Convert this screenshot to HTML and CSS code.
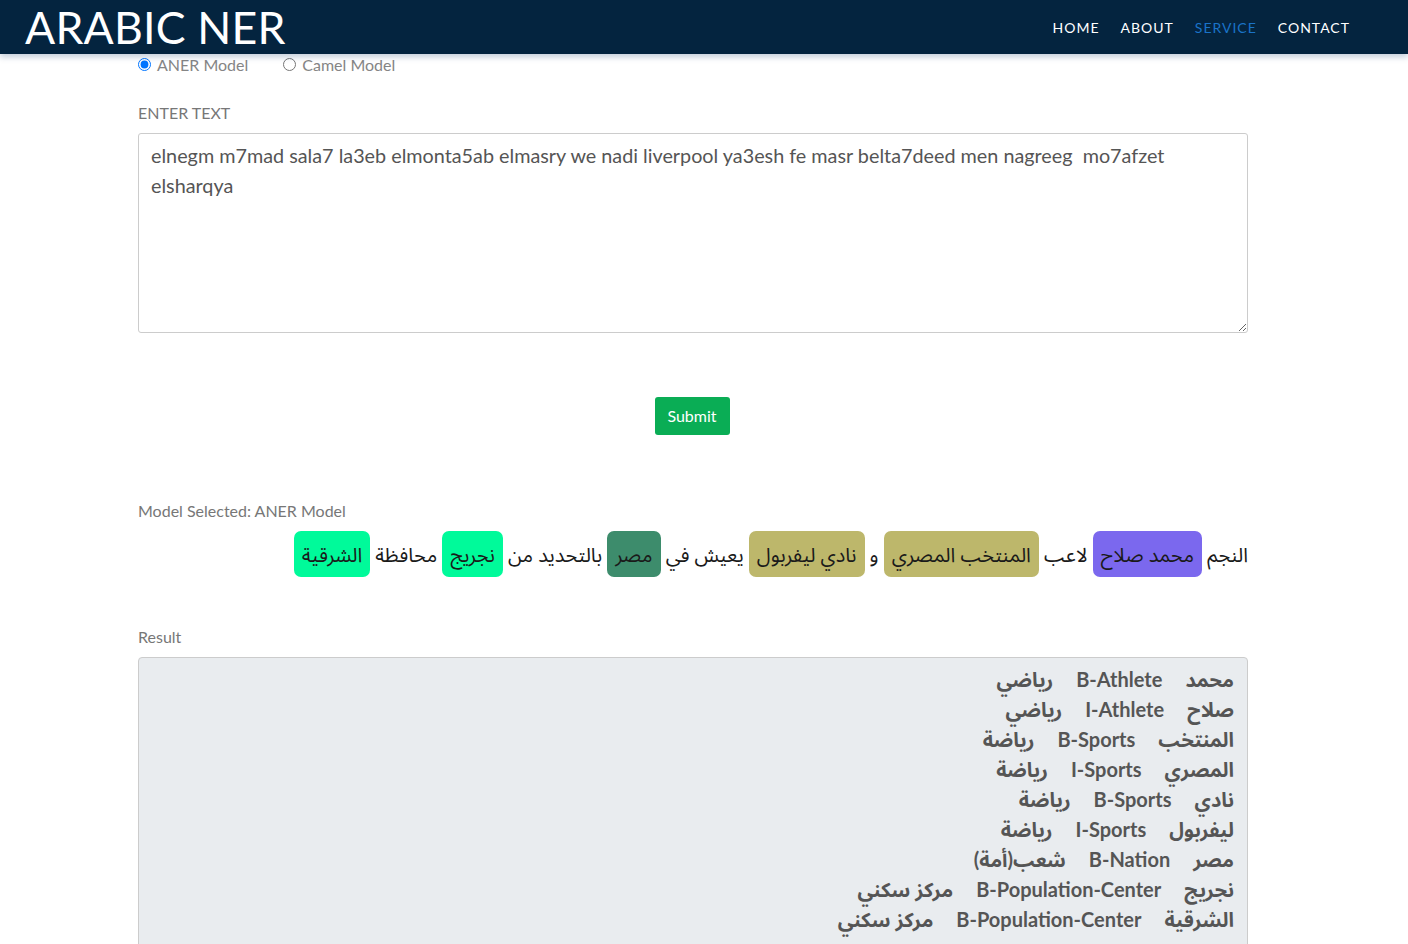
FILE: index.html
```html
<!DOCTYPE html>
<html lang="en">
<head>
<meta charset="utf-8">
<title>Arabic NER</title>
<link rel="stylesheet" href="styles.css">
</head>
<body>
<header class="topbar">
  <div class="brand">ARABIC NER</div>
  <nav class="nav">
    <a href="#" class="nav-link">HOME</a>
    <a href="#" class="nav-link">ABOUT</a>
    <a href="#" class="nav-link active">SERVICE</a>
    <a href="#" class="nav-link">CONTACT</a>
  </nav>
</header>
<main class="content">
  <div class="models">
    <label class="model"><input type="radio" name="model" checked> ANER Model</label>
    <label class="model"><input type="radio" name="model"> Camel Model</label>
  </div>
  <div class="field-label enter">ENTER TEXT</div>
  <textarea class="input-text">elnegm m7mad sala7 la3eb elmonta5ab elmasry we nadi liverpool ya3esh fe masr belta7deed men nagreeg  mo7afzet elsharqya</textarea>
  <div class="submit-row"><button class="submit">Submit</button></div>
  <div class="field-label selected">Model Selected: ANER Model</div>
  <div class="entities" dir="rtl">النجم <span class="ent athlete">محمد صلاح</span> لاعب <span class="ent sports">المنتخب المصري</span> و <span class="ent sports">نادي ليفربول</span> يعيش في <span class="ent nation">مصر</span> بالتحديد من <span class="ent center">نجريج</span> محافظة <span class="ent center">الشرقية</span></div>
  <div class="field-label result-label">Result</div>
  <div class="result" dir="rtl">
    <div class="row"><span>محمد</span><span>B-Athlete</span><span>رياضي</span></div>
    <div class="row"><span>صلاح</span><span>I-Athlete</span><span>رياضي</span></div>
    <div class="row"><span>المنتخب</span><span>B-Sports</span><span>رياضة</span></div>
    <div class="row"><span>المصري</span><span>I-Sports</span><span>رياضة</span></div>
    <div class="row"><span>نادي</span><span>B-Sports</span><span>رياضة</span></div>
    <div class="row"><span>ليفربول</span><span>I-Sports</span><span>رياضة</span></div>
    <div class="row"><span>مصر</span><span>B-Nation</span><span>شعب(أمة)</span></div>
    <div class="row"><span>نجريج</span><span>B-Population-Center</span><span>مركز سكني</span></div>
    <div class="row"><span>الشرقية</span><span>B-Population-Center</span><span>مركز سكني</span></div>
  </div>
</main>
</body>
</html>
```
FILE: styles.css
```css
html, body {
  margin: 0;
  padding: 0;
}
body {
  background: #ffffff;
  font-family: Lato, "Noto Sans Arabic", "Noto Naskh Arabic", "DejaVu Sans", sans-serif;
  color: #666;
  overflow: hidden;
}
.topbar {
  height: 54px;
  background: #04243f;
  display: flex;
  align-items: center;
  justify-content: space-between;
  padding: 0 58px 0 25px;
  box-shadow: 0 3px 6px rgba(20, 60, 110, 0.25);
  position: relative;
}
.brand {
  color: #ffffff;
  font-size: 44.6px;
  line-height: 54px;
  letter-spacing: 0.2px;
}
.nav {
  display: flex;
  gap: 21px;
}
.nav-link {
  color: #ffffff;
  text-decoration: none;
  font-size: 14px;
  letter-spacing: 1px;
}
.nav-link.active {
  color: #1a73c8;
}
.content {
  width: 1110px;
  margin-left: 138px;
}
.models {
  display: flex;
  gap: 35px;
  height: 21px;
  align-items: center;
}
.model {
  font-size: 16px;
  color: #858585;
  display: flex;
  align-items: center;
  gap: 6px;
}
.model input {
  margin: 0;
  width: 13px;
  height: 13px;
}
.field-label {
  font-size: 16px;
  color: #777;
  line-height: 20px;
}
.enter {
  margin-top: 28px;
}
.input-text {
  display: block;
  box-sizing: border-box;
  width: 1110px;
  height: 200px;
  margin-top: 10px;
  border: 1px solid #cccccc;
  border-radius: 3px;
  padding: 6px 12px;
  font-family: Lato, "DejaVu Sans", sans-serif;
  font-size: 19.8px;
  line-height: 30px;
  color: #555;
  background: #fff;
  resize: vertical;
}
.submit-row {
  display: flex;
  justify-content: center;
  margin-top: 64px;
  padding-right: 2px;
}
.submit {
  width: 75px;
  height: 38px;
  background: #0aad55;
  color: #ffffff;
  border: none;
  border-radius: 3px;
  font-family: Lato, sans-serif;
  font-size: 16px;
  padding: 0 0 2px;
}
.selected {
  margin-top: 66px;
}
.entities {
  margin-top: 10px;
  font-size: 20px;
  line-height: 46px;
  color: #1a1a1a;
  text-align: right;
}
.ent {
  display: inline-block;
  padding: 0 8px;
  border-radius: 7px;
  line-height: 46px;
}
.athlete { background: #7b68ee; }
.sports { background: #bdb76b; }
.nation { background: #3d8c6c; }
.center { background: #00fa9a; }
.result-label {
  margin-top: 50px;
}
.result {
  margin-top: 10px;
  background: #e9ecef;
  border: 1px solid #cccccc;
  border-radius: 4px;
  padding: 6px 13px 40px;
  font-size: 20px;
  line-height: 30px;
  font-weight: 700;
  color: #555;
}
.row {
  display: flex;
  gap: 23px;
}
```
